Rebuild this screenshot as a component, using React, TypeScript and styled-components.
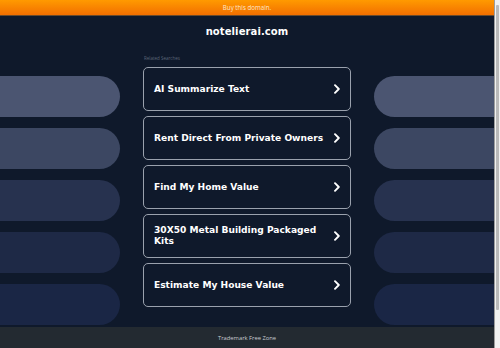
import React from "react";
import styled, { createGlobalStyle } from "styled-components";

const Global = createGlobalStyle`
  html, body { margin: 0; padding: 0; background: #0f192b; overflow: hidden; }
  #root { width: 500px; height: 348px; }
`;

const Shell = styled.div`
  display: flex;
  width: 500px;
  height: 348px;
`;

const Page = styled.div`
  flex: 1;
  display: flex;
  flex-direction: column;
  background: #0f192b;
  min-width: 0;
`;

const TopBar = styled.div`
  height: 16px;
  background: linear-gradient(#ff9a00, #f26f00);
  border-bottom: 1px solid #6a4a2a;
  box-sizing: border-box;
  display: flex;
  align-items: center;
  justify-content: center;
  font-family: "Open Sans", "DejaVu Sans", sans-serif;
  font-size: 6.2px;
  color: #fde7cc;
`;

const Main = styled.div`
  flex: 1;
  display: grid;
  grid-template-columns: 120px 208px 120px;
  justify-content: space-between;
`;

const PillColumn = styled.div`
  display: flex;
  flex-direction: column;
  gap: 11px;
  padding-top: 60px;
`;

const Pill = styled.div<{ $side: "left" | "right"; $bg: string }>`
  height: 41px;
  background: ${(p) => p.$bg};
  border-radius: ${(p) => (p.$side === "left" ? "0 21px 21px 0" : "21px 0 0 21px")};
`;

const Center = styled.div`
  display: flex;
  flex-direction: column;
  align-items: stretch;
`;

const Title = styled.h1`
  margin: 8px 0 0;
  height: 16px;
  line-height: 16px;
  text-align: center;
  font-family: "DejaVu Sans", sans-serif;
  font-weight: bold;
  font-size: 10px;
  color: #ffffff;
  letter-spacing: 0.1px;
`;

const Label = styled.div`
  margin-top: 15px;
  height: 6px;
  line-height: 6px;
  padding-left: 1px;
  font-family: "Open Sans", "DejaVu Sans", sans-serif;
  font-size: 4.5px;
  color: #5b6577;
`;

const List = styled.div`
  margin-top: 6px;
  display: flex;
  flex-direction: column;
  gap: 5px;
`;

const Card = styled.a`
  height: 44px;
  box-sizing: border-box;
  border: 1.3px solid #9aa1ad;
  border-radius: 5px;
  display: flex;
  align-items: center;
  justify-content: space-between;
  padding: 0 9px 0 10px;
  text-decoration: none;
  color: #ffffff;
  background: #0f192b;
`;

const CardText = styled.span`
  font-family: "DejaVu Sans", sans-serif;
  font-weight: bold;
  font-size: 9.1px;
  line-height: 10.7px;
  max-width: 170px;
`;

const Footer = styled.div`
  height: 21px;
  background: #232a31;
  display: flex;
  align-items: center;
  justify-content: center;
  font-family: "Open Sans", "DejaVu Sans", sans-serif;
  font-size: 5.8px;
  color: #c9cdd2;
`;

const ScrollTrack = styled.div`
  width: 6px;
  background: #f1f1f1;
  border-left: 1px solid #9c9c9c;
  box-sizing: border-box;
  display: flex;
  flex-direction: column;
  align-items: center;
  padding: 3px 0;
`;

const ScrollThumb = styled.div`
  width: 3px;
  height: 305px;
  margin-top: 2px;
  background: #b9b9b9;
  border-radius: 1px;
`;

const Chevron = () => (
  <svg width="8" height="10" viewBox="0 0 8 10">
    <path d="M2 1.2 L5.8 5 L2 8.8" fill="none" stroke="#fff" strokeWidth="1.9" strokeLinecap="round" strokeLinejoin="round" />
  </svg>
);

const items = [
  "AI Summarize Text",
  "Rent Direct From Private Owners",
  "Find My Home Value",
  "30X50 Metal Building Packaged Kits",
  "Estimate My House Value",
];

const pillColors = ["#4b5571", "#3c4762", "#27324f", "#1e2946", "#1a2645"];

export default function App() {
  return (
    <>
      <Global />
      <Shell>
        <Page>
          <TopBar>Buy this domain.</TopBar>
          <Main>
            <PillColumn>
              {pillColors.map((c, i) => (
                <Pill key={i} $side="left" $bg={c} />
              ))}
            </PillColumn>
            <Center>
              <Title>notelierai.com</Title>
              <Label>Related Searches</Label>
              <List>
                {items.map((t) => (
                  <Card key={t} href="#">
                    <CardText>{t}</CardText>
                    <Chevron />
                  </Card>
                ))}
              </List>
            </Center>
            <PillColumn>
              {pillColors.map((c, i) => (
                <Pill key={i} $side="right" $bg={c} />
              ))}
            </PillColumn>
          </Main>
          <Footer>Trademark Free Zone</Footer>
        </Page>
        <ScrollTrack>
          <ScrollThumb />
        </ScrollTrack>
      </Shell>
    </>
  );
}
